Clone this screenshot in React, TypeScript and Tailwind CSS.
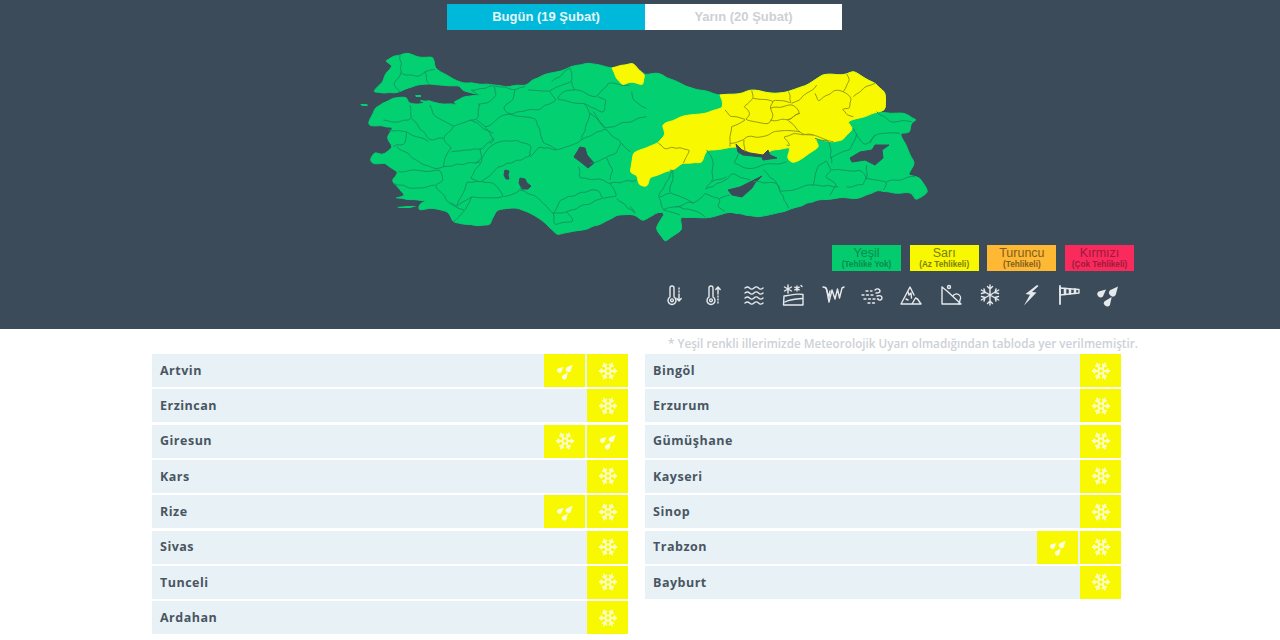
import React from "react";
import { Snowflake } from "lucide-react";

const outline = "386,61 393,56 408,53 418,57 433,57 435,68 447,75 460,82 477,84 493,85 507,87 517,85 527,85 532,80 543,75 557,72 570,67 587,63 612,68 632,63 645,75 658,73 667,78 680,83 692,88 710,92 720,95 743,93 752,90 770,93 787,92 807,85 822,75 847,74 853,71 863,77 875,83 885,92 885,110 878,113 903,113 917,120 912,122 910,132 900,133 908,150 915,163 908,175 920,178 928,192 915,200 912,193 893,193 878,190 860,198 837,198 817,200 797,207 777,213 757,217 730,212 705,218 680,217 682,230 665,242 656,228 665,213 658,212 643,221 635,215 617,215 603,223 583,230 557,235 550,228 537,217 517,208 497,210 490,225 477,226 453,222 448,212 430,208 418,210 420,203 427,201 395,198 405,195 398,187 392,180 398,172 385,163 373,164 370,160 375,152 382,155 387,152 393,147 387,137 393,127 368,125 375,108 383,103 393,98 407,97 408,103 422,104 428,100 437,103 458,105 453,102 463,97 485,95 472,93 462,90 460,86 450,86 432,84 417,85 395,93 373,92 383,82 386,73 392,66";
const yellowMain = "720,95 743,93 752,90 770,93 787,92 807,85 822,75 847,74 853,71 863,77 875,83 885,92 885,110 878,112 847,122 853,128 843,140 833,142 815,138 819,147 803,158 792,163 787,158 790,147 772,150 763,155 745,152 738,147 707,150 702,163 682,163 673,170 650,177 647,187 639,185 637,175 630,173 633,153 658,143 665,135 662,125 683,116 707,113 723,107";
const sinop = "612,68 632,63 645,75 643,85 630,82 622,85 616,78";
const lakes = [
  "580,147 585,148 587,155 594,163 588,168 582,163 574,157 577,152",
  "505,170 509,171 508,175 509,179 506,179 504,175",
  "520,178 525,179 527,183 531,186 528,189 522,189 519,183",
  "850,158 860,152 872,150 875,145 889,145 882,150 883,158 875,165 865,160 852,162",
  "736,144 742,150 750,153 763,155 768,150 770,155 777,158 763,160 762,157 743,155 738,152",
  "728,190 740,187 750,182 762,176 755,183 752,188 742,197 732,195",
];
const islands = [
  "360,104 367,104 368,106 362,106",
  "415,95 421,95 421,97 416,97",
  "420,100 428,101 427,102 421,102",
  "397,207 407,206 417,206 410,208 399,208",
];
const linesWest = [
  "150,45 155,95 130,130 150,155", "255,88 225,95 200,110 155,100", "225,95 235,130",
  "385,165 360,150 390,145 435,138 440,165 410,190 385,195", "435,138 495,150 525,140",
  "495,150 490,178 460,205 480,222 500,215 560,210 620,180 600,152 535,150", "600,152 665,125 660,85", "605,125 660,85",
  "665,125 675,150 740,170 775,130", "640,180 620,180 640,155 675,150", "640,180 700,190 760,218 770,180 745,170",
  "845,155 850,180 890,205", "775,130 840,135", "240,195 250,225 310,260 360,240 380,240 390,195 385,190",
  "380,240 405,262 460,225 480,222 560,240 580,310 620,330 695,300 720,220 700,190", "405,262 435,300 420,310",
  "310,260 280,295 305,325 290,345 280,380", "360,240 430,280", "430,295 400,325 305,335", "180,195 185,235 150,245 100,240",
  "185,235 240,300 280,295", "115,270 170,275 165,310 130,320", "170,275 235,305", "140,320 200,360 250,385 280,380",
  "390,325 395,365 360,415 395,425 445,380 540,350 545,320 500,300 435,310 375,370", "280,380 390,365",
  "145,395 270,390 280,420 255,435 300,490 320,500 350,425 395,425", "130,430 190,445 255,435",
  "320,500 365,470 460,470 430,430 395,425", "460,470 510,450 515,440", "300,490 345,510 310,545", "345,510 365,470",
  "540,350 570,320 620,330", "510,450 560,470 610,520", "610,520 650,515 760,475 750,455 720,450 630,480 610,520",
  "610,520 615,555 670,545 650,515", "760,475 800,470 780,430 760,420 690,415 685,380", "720,370 770,350 790,390 780,420",
  "780,430 860,420", "800,475 855,520", "695,300 765,265 815,310 800,340 770,350", "765,265 730,215", "720,220 765,265 890,230",
  "815,310 840,335",
];
const linesEast = [
  "670,235 705,285 735,255 810,250", "740,185 780,215 845,215", "735,255 720,280", "555,265 590,270 600,290 605,340",
  "470,335 350,355 310,340 325,310", "230,300 250,340 245,395 225,420 295,385 310,370 345,385 360,390",
  "120,360 130,360 120,430 190,460 225,430", "245,395 290,380", "225,430 270,445 262,470 285,485", "270,445 300,435",
  "370,395 440,400 475,475", "440,400 450,425 550,405 625,410", "400,360 440,400", "550,405 555,375 565,345 590,330 605,360 585,380 620,405 600,435",
  "605,360 690,360 710,385 700,405 650,410", "600,325 660,300 680,250", "705,385 770,395 760,420", "770,395 855,380", "710,345 710,385",
  "120,430 85,440 100,480 140,470 175,455 190,460", "135,470 185,480 225,500", "100,480 150,495", "0,470 15,490", "85,440 130,360",
];
const linesYellow = [
  "285,180 300,200 345,208", "365,122 370,145 340,170 360,190 345,208 415,222 430,195 420,170 430,150 485,160 475,125", "370,145 430,155",
  "420,175 490,165 510,190 470,210 420,210", "485,160 510,150 560,105", "510,190 470,210 515,250 550,255 610,275", "305,230 345,210", "305,230 300,290",
  "300,280 340,270 350,260 395,260 430,245 510,245", "342,270 345,305", "470,285 480,290 460,260 490,250 550,255", "85,280 100,295 150,292 180,300 160,340",
  "555,130 565,155 610,122 640,125 665,145 660,175 635,178 650,195 670,200", "640,125 660,90 650,72", "735,100 700,115 670,140",
];

type P = [number, number];
function organic(src: string, step: number, amp: number, closed: boolean): string {
  const base: P[] = src.trim().split(/\s+/).map((s) => s.split(",").map(Number) as P);
  if (closed) base.push(base[0]);
  const pts: P[] = [];
  for (let i = 0; i < base.length - 1; i++) {
    const [ax, ay] = base[i];
    const [bx, by] = base[i + 1];
    const len = Math.hypot(bx - ax, by - ay) || 1;
    const n = Math.max(1, Math.round(len / step));
    for (let j = 0; j < n; j++) {
      const t = j / n;
      const x = ax + (bx - ax) * t;
      const y = ay + (by - ay) * t;
      const o = j === 0 ? 0 : amp * Math.sin(x * 1.37 + y * 2.11);
      pts.push([x - ((by - ay) / len) * o, y + ((bx - ax) / len) * o]);
    }
  }
  if (!closed) pts.push(base[base.length - 1]);
  const f = (v: number) => v.toFixed(1);
  let d = `M${f(pts[0][0])} ${f(pts[0][1])}`;
  for (let i = 1; i < pts.length - 1; i++) {
    const mx = (pts[i][0] + pts[i + 1][0]) / 2;
    const my = (pts[i][1] + pts[i + 1][1]) / 2;
    d += `Q${f(pts[i][0])} ${f(pts[i][1])} ${f(mx)} ${f(my)}`;
  }
  d += `L${f(pts[pts.length - 1][0])} ${f(pts[pts.length - 1][1])}`;
  return closed ? d + "Z" : d;
}

function Map() {
  const land = "#03d071";
  const sea = "#3c4b5a";
  const yellow = "#f8f800";
  return (
    <svg className="block ml-[355px] mt-[15px] blur-[0.35px]" width="580" height="200" viewBox="355 45 580 200" aria-hidden="true">
      <path d={organic(outline, 6, 0.7, true)} fill={land} stroke={land} strokeWidth="1" strokeLinejoin="round" />
      {islands.map((p) => <polygon key={p} points={p} fill={land} />)}
      <path d={organic(yellowMain, 6, 0.7, true)} fill={yellow} stroke={yellow} strokeWidth="1" />
      <path d={organic(sinop, 5, 0.6, true)} fill={yellow} stroke={yellow} strokeWidth="1" />
      {lakes.map((p) => <polygon key={p} points={p} fill={sea} stroke={sea} strokeWidth="1" strokeLinejoin="round" />)}
      <g transform="translate(350 40) scale(0.33333)" fill="none" stroke="#12935e" strokeWidth="2.8" strokeLinejoin="round">
        {linesWest.map((p) => <path key={p} d={organic(p, 14, 3.5, false)} />)}
      </g>
      <g transform="translate(630 50) scale(0.33333)" fill="none" stroke="#12935e" strokeWidth="2.8" strokeLinejoin="round">
        {linesEast.map((p) => <path key={p} d={organic(p, 14, 3.5, false)} />)}
      </g>
      <g transform="translate(630 50) scale(0.33333)" fill="none" stroke="#8f9412" strokeWidth="2.8" strokeLinejoin="round">
        {linesYellow.map((p) => <path key={p} d={organic(p, 14, 3.5, false)} />)}
      </g>
    </svg>
  );
}

const dropPaths = (
  <>
    <path d="M22 3.500L19.650 12.070A3.700 3.700 0 1 1 13.950 7.330Z" />
    <path d="M10 6.600L6.950 13.500A3.300 3.300 0 1 1 2.650 8.500Z" />
    <path d="M15.700 14L13.970 22.050A3.300 3.300 0 1 1 8.630 18.150Z" />
  </>
);

function Drops({ className }: { className?: string }) {
  return (
    <svg className={className} viewBox="0 0 24 24" fill="currentColor" aria-hidden="true">
      {dropPaths}
    </svg>
  );
}

function S({ children, fill }: { children: React.ReactNode; fill?: boolean }) {
  return (
    <svg className="w-6 h-6" viewBox="0 0 24 24" fill={fill ? "currentColor" : "none"} stroke={fill ? "none" : "currentColor"} strokeWidth="1.4" strokeLinecap="round" strokeLinejoin="round" aria-hidden="true">
      {children}
    </svg>
  );
}

const icons: React.ReactNode[] = [
  <S key="1"><path d="M7 14V5a2 2 0 0 1 4 0v9a4 4 0 1 1-4 0Z" /><circle cx="9" cy="17.300" r="1.400" /><path d="M16 5v1M16 8v1M16 11v7M13.800 15.500 16 18l2.200-2.500" /></S>,
  <S key="2"><path d="M7 14V5a2 2 0 0 1 4 0v9a4 4 0 1 1-4 0Z" /><circle cx="9" cy="17.300" r="1.400" /><path d="M16 4v7M13.800 6.500 16 4l2.200 2.500M16 13v1M16 16v1M16 19v1" /></S>,
  <S key="3"><path d="M3 5c2-1.500 3-1.500 4.500 0s3 1.500 4.500 0 3-1.500 4.500 0 3 1.500 4.500 0M3 10c2-1.500 3-1.500 4.500 0s3 1.500 4.500 0 3-1.500 4.500 0 3 1.500 4.500 0M3 15c2-1.500 3-1.500 4.500 0s3 1.500 4.500 0 3-1.500 4.500 0 3 1.500 4.500 0M3 20c2-1.500 3-1.500 4.500 0s3 1.500 4.500 0 3-1.500 4.500 0 3 1.500 4.500 0" /></S>,
  <S key="4"><path d="M7 2v8M3.500 4l7 4M10.500 4l-7 4M16 3v5M13.800 4.200l4.400 2.600M18.200 4.200l-4.400 2.600M20 2.500l1 1" /><path d="M3 13c5 0 11-3 19-1.500V22H2.500ZM4 19c5-3 11-3 17-3.500" /></S>,
  <S key="5"><path d="M2 4c2 0 3 .5 3.500 2L8 19 11 7l3 9 2.500-10 2 9L21 5l2-1" /><path d="M5 5l3 9 1-6" /></S>,
  <S key="6"><path strokeDasharray="2 2.500" d="M2 12h13M4 16h14M6 8h6M8 20h8" /><path d="M15 7c2-2 5-1 5 1s-3 2-4 2M17 13c3-1 5 0 5 2s-3 3-4 1" /></S>,
  <S key="7"><path d="M2 21 11 4l4 8M13 21l3.500-6 2 1 3.500 5ZM2 21h20" /><path d="M9 9l1 3 2-2 .5 5M7 16l2 1" /></S>,
  <S key="8"><path d="M3 4v17h19L8 8M3 4l5 4" /><circle cx="10" cy="4" r="1.500" /><path d="M14 13a4 4 0 1 1 7 4l-1 4" /></S>,
  <S key="9"><path d="M12 2v20M3.300 7l17.400 10M20.700 7 3.300 17M9.500 3.500 12 6l2.500-2.500M9.500 20.500 12 18l2.500 2.500M3.500 10.500 7 9.500 6 6M20.500 13.500 17 14.500l1 3.500M20.500 10.500 17 9.500 18 6M3.500 13.500 7 14.500 6 18" /></S>,
  <S key="10" fill><path d="M19 2 7.500 11l4.500.8L6 22.500 18.500 9.500 14 9l6.500-6Z" /></S>,
  <S key="11"><path d="M3 3v18" strokeWidth="1.800" /><path d="M3 5l19 1.500v3.500L3 12Z" /><path d="M8 6v5M13 6.500v4M18 6.500v3.500" strokeWidth="2.500" /></S>,
  <S key="12" fill>{dropPaths}</S>,
];

const legend = [
  { t: "Yeşil", s: "(Tehlike Yok)", c: "bg-[#03cb6e] text-[#0b8a4f]" },
  { t: "Sarı", s: "(Az Tehlikeli)", c: "bg-[#f8f800] text-[#7d7d14]" },
  { t: "Turuncu", s: "(Tehlikeli)", c: "bg-[#ffb833] text-[#80601f]" },
  { t: "Kırmızı", s: "(Çok Tehlikeli)", c: "bg-[#fa2a5c] text-[#9c1a3c]" },
];

type Kind = "s" | "d";
const left: [string, Kind[]][] = [
  ["Artvin", ["d", "s"]], ["Erzincan", ["s"]], ["Giresun", ["s", "d"]], ["Kars", ["s"]],
  ["Rize", ["d", "s"]], ["Sivas", ["s"]], ["Tunceli", ["s"]], ["Ardahan", ["s"]],
];
const right: [string, Kind[]][] = [
  ["Bingöl", ["s"]], ["Erzurum", ["s"]], ["Gümüşhane", ["s"]], ["Kayseri", ["s"]],
  ["Sinop", ["s"]], ["Trabzon", ["d", "s"]], ["Bayburt", ["s"]],
];

function Row({ name, kinds }: { name: string; kinds: Kind[] }) {
  return (
    <div className="h-[33px] flex bg-[#e8f1f6] items-stretch gap-[2px]">
      <div className="flex-1 pl-2 pt-[1px] flex items-center text-[12.500px] font-bold tracking-[0.5px] text-[#485662]">{name}</div>
      {kinds.map((k, i) => (
        <div key={i} className="w-[41px] bg-[#f8f800] flex items-center justify-center text-[#fcfcc4]">
          {k === "s" ? <Snowflake className="w-5 h-5" strokeWidth={2.2} /> : <Drops className="w-[18px] h-[18px] text-[#fdfde0]" />}
        </div>
      ))}
    </div>
  );
}

export default function App() {
  return (
    <div className="w-[1280px] h-[640px] overflow-hidden bg-white font-['Open_Sans',sans-serif]">
      <header className="h-[329px] bg-[#3c4b5a] pt-[4px]">
        <div className="ml-[447px] w-[395px] h-[26px] flex font-['Liberation_Sans',sans-serif] text-[13px] font-bold">
          <div className="w-[198px] bg-[#00b8d9] text-[#e6f7fb] flex items-center justify-center">Bugün (19 Şubat)</div>
          <div className="flex-1 bg-white text-[#cdd0d4] flex items-center justify-center">Yarın (20 Şubat)</div>
        </div>
        <Map />
        <div className="flex justify-end gap-[8.670px] pr-[146px] font-['Liberation_Sans',sans-serif]">
          {legend.map((l) => (
            <div key={l.t} className={`w-[69px] h-[26px] flex flex-col items-center justify-center leading-none ${l.c}`}>
              <span className="text-[12.500px] leading-[14px]">{l.t}</span>
              <span className="text-[8.200px] font-bold leading-[10px]">{l.s}</span>
            </div>
          ))}
        </div>
        <div className="mt-[12px] ml-[663px] flex gap-[15.400px] text-[#e6e9ec] blur-[0.3px]">{icons}</div>
      </header>
      <p className="pt-[6px] h-[25px] pr-[142px] text-right text-[11.700px] font-semibold text-[#cdd1d6] leading-[16px]">* Yeşil renkli illerimizde Meteorolojik Uyarı olmadığından tabloda yer verilmemiştir.</p>
      <main className="ml-[152px] w-[969px] grid grid-cols-2 gap-x-[17px] items-start">
        <div className="flex flex-col gap-[2.330px]">{left.map(([n, k]) => <Row key={n} name={n} kinds={k} />)}</div>
        <div className="flex flex-col gap-[2.330px]">{right.map(([n, k]) => <Row key={n} name={n} kinds={k} />)}</div>
      </main>
    </div>
  );
}
